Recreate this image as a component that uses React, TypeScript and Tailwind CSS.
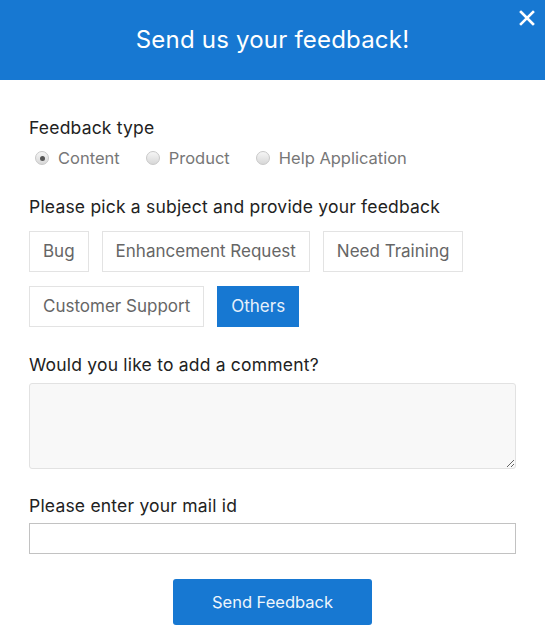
import React from "react";

function Radio({ checked, label }: { checked?: boolean; label: string }) {
  return (
    <div className="flex items-center gap-[9px]">
      <span className="w-[14px] h-[14px] rounded-full border border-[#c8c8c8] bg-[linear-gradient(#f6f6f6,#d8d8d8)] flex items-center justify-center">
        {checked && <span className="w-[5px] h-[5px] rounded-full bg-[#555]" />}
      </span>
      <span className="text-[#777]">{label}</span>
    </div>
  );
}

function Chip({ label, active }: { label: string; active?: boolean }) {
  return (
    <div
      className={
        active
          ? "h-[41px] px-[13px] flex items-center bg-[#1778d2] border border-[#1778d2] text-[#e6f0fb]"
          : "h-[41px] px-[13px] flex items-center bg-white border border-[#e3e3e3] text-[#666]"
      }
    >
      {label}
    </div>
  );
}

export default function App() {
  return (
    <div className="w-[545px] h-[643px] bg-white font-['Inter',sans-serif]">
      <div className="relative h-[80px] bg-[#1778d2] flex items-center justify-center">
        <h1 className="text-white text-[24px] tracking-[0.2px]">Send us your feedback!</h1>
        <svg className="absolute right-[10px] top-[10px]" width="16" height="16" viewBox="0 0 16 16">
          <path d="M2 2 L14 14 M14 2 L2 14" stroke="white" strokeWidth="2.6" strokeLinecap="square" />
        </svg>
      </div>
      <div className="px-[29px] pt-[37px] text-[17.5px] tracking-[0.2px]">
        <div className="text-[#222] leading-[22px]">Feedback type</div>
        <div className="flex gap-[26px] mt-[9px] ml-[6px] h-[20px] items-center text-[16.5px] tracking-normal">
          <Radio checked label="Content" />
          <Radio label="Product" />
          <Radio label="Help Application" />
        </div>
        <div className="text-[#222] mt-[28px] leading-[22px]">Please pick a subject and provide your feedback</div>
        <div className="flex flex-wrap gap-x-[13px] gap-y-[14px] mt-[13px] text-[17px] tracking-normal">
          <Chip label="Bug" />
          <Chip label="Enhancement Request" />
          <Chip label="Need Training" />
          <Chip label="Customer Support" />
          <Chip label="Others" active />
        </div>
        <div className="text-[#222] mt-[27px] leading-[22px]">Would you like to add a comment?</div>
        <textarea className="block mt-[7px] w-[487px] h-[86px] bg-[#f8f8f8] border border-[#e2e2e2] rounded-[3px] resize-y outline-none" />
        <div className="text-[#222] mt-[26px] leading-[22px]">Please enter your mail id</div>
        <input className="block mt-[6px] w-[487px] h-[31px] border border-[#c2c2c2] outline-none" />
        <div className="flex justify-center mt-[25px]">
          <button className="w-[199px] h-[46px] rounded-[3px] bg-[#1778d2] text-[#eef5fc] text-[16.5px] tracking-normal">Send Feedback</button>
        </div>
      </div>
    </div>
  );
}
